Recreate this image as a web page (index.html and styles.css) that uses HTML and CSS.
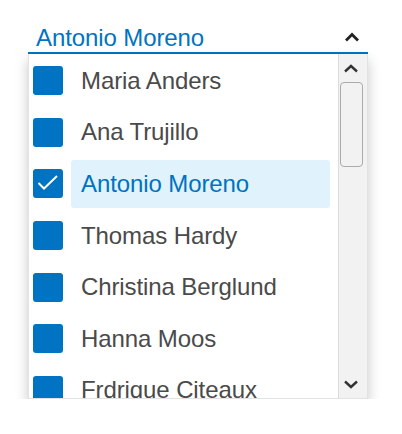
FILE: index.html
```html
<!DOCTYPE html>
<html>
<head>
<meta charset="utf-8">
<link rel="stylesheet" href="styles.css">
</head>
<body>
<div class="combo">
  <div class="combo-header">
    <span class="combo-value">Antonio Moreno</span>
    <svg class="combo-chevron" width="16" height="10" viewBox="0 0 16 10"><polyline points="2,8.5 8,2.5 14,8.5" fill="none" stroke="#222" stroke-width="2.8"/></svg>
  </div>
  <div class="dropdown">
    <ul class="options">
      <li class="option"><span class="check"></span><span class="label">Maria Anders</span></li>
      <li class="option"><span class="check"></span><span class="label">Ana Trujillo</span></li>
      <li class="option selected"><span class="check"><svg width="30" height="29" viewBox="0 0 30 29"><polyline points="5.5,14 11,19.5 24,7" fill="none" stroke="#fff" stroke-width="2"/></svg></span><span class="label">Antonio Moreno</span></li>
      <li class="option"><span class="check"></span><span class="label">Thomas Hardy</span></li>
      <li class="option"><span class="check"></span><span class="label">Christina Berglund</span></li>
      <li class="option"><span class="check"></span><span class="label">Hanna Moos</span></li>
      <li class="option"><span class="check"></span><span class="label">Frdrique Citeaux</span></li>
    </ul>
    <div class="scrollbar">
      <div class="sb-btn"><svg width="16" height="9" viewBox="0 0 16 9"><polyline points="2,7.5 8,2 14,7.5" fill="none" stroke="#333" stroke-width="2.4"/></svg></div>
      <div class="sb-thumb"></div>
      <div class="sb-track"></div>
      <div class="sb-btn"><svg width="16" height="9" viewBox="0 0 16 9"><polyline points="2,1.5 8,7 14,1.5" fill="none" stroke="#333" stroke-width="2.4"/></svg></div>
    </div>
  </div>
</div>
</body>
</html>
```

FILE: styles.css
```css
html, body {
  margin: 0;
  padding: 0;
  background: #fff;
}
body {
  font-family: "Liberation Sans", Arial, sans-serif;
}
.combo {
  margin-left: 28px;
  width: 340px;
}
.combo-header {
  display: flex;
  align-items: center;
  justify-content: space-between;
  padding-top: 24px;
  padding-left: 8px;
  line-height: 28px;
  font-size: 24px;
  color: #0074c2;
  border-bottom: 2px solid #0074c2;
}
.combo-value {
  letter-spacing: -0.1px;
}
.combo-chevron {
  margin-right: 8px;
  margin-top: -2px;
}
.dropdown {
  display: flex;
  height: 345px;
  border: 1px solid #e2e2e2;
  border-top: none;
  box-sizing: border-box;
  box-shadow: 0 6px 12px rgba(0, 0, 0, 0.22);
  overflow: hidden;
}
.options {
  flex: 1;
  list-style: none;
  margin: 0;
  padding: 1px 0 0 4px;
}
.option {
  display: flex;
  align-items: center;
  height: 51.6px;
}
.check {
  flex: none;
  width: 30px;
  height: 29px;
  background: #0074c2;
  border-radius: 3px;
}
.check svg {
  display: block;
}
.label {
  flex: 1;
  margin: 0 8px;
  height: 48px;
  line-height: 48px;
  padding-left: 10px;
  border-radius: 3px;
  font-size: 24px;
  color: #4a4a4a;
  letter-spacing: -0.1px;
}
.selected .label {
  background: #e0f3fc;
  color: #0072c0;
}
.scrollbar {
  flex: none;
  width: 29px;
  display: flex;
  flex-direction: column;
  background: #f2f2f2;
  border-left: 1px solid #dcdcdc;
  box-sizing: border-box;
  padding-right: 4px;
}
.sb-btn {
  height: 28px;
  display: flex;
  align-items: center;
  justify-content: center;
}
.sb-thumb {
  height: 85px;
  margin-left: 1px;
  border: 1px solid #ababab;
  border-radius: 4px;
  background: #f2f2f2;
  box-sizing: border-box;
}
.sb-track {
  flex: 1;
}
```
